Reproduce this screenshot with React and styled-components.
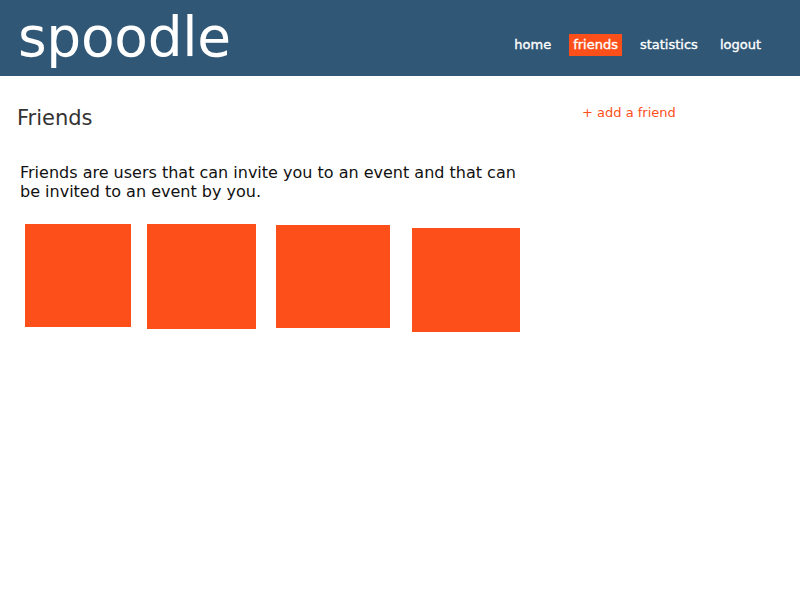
import React from "react";
import styled, { createGlobalStyle } from "styled-components";

const GlobalStyle = createGlobalStyle`
  body {
    margin: 0;
    background: #ffffff;
    font-family: "DejaVu Sans", Verdana, sans-serif;
  }
`;

const Header = styled.header`
  height: 76px;
  background: #305776;
  display: flex;
  align-items: center;
  justify-content: space-between;
  padding: 0 35px 0 18px;
  box-sizing: border-box;
`;

const Logo = styled.div`
  color: #ffffff;
  font-size: 55px;
  line-height: 1;
  letter-spacing: -0.3px;
  margin-top: -2px;
`;

const Nav = styled.nav`
  display: flex;
  align-items: center;
  gap: 14px;
  margin-top: 13px;
`;

const NavLink = styled.a`
  color: #ffffff;
  font-size: 13px;
  -webkit-text-stroke: 0.35px #ffffff;
  padding: 3px 4px 4px;
  background: ${(p) => (p.$active ? "#fd4f1a" : "transparent")};
  text-decoration: none;
`;

const Body = styled.div`
  display: flex;
  padding: 26px 0 0 17px;
`;

const Main = styled.main`
  width: 510px;
  padding-top: 4px;
`;

const Title = styled.h1`
  margin: 0;
  font-size: 21px;
  font-weight: normal;
  color: #333333;
  line-height: 24px;
`;

const Intro = styled.p`
  margin: 33px 0 0 3px;
  font-size: 16px;
  line-height: 19px;
  color: #111111;
`;

const Pics = styled.div`
  display: flex;
  align-items: flex-start;
  margin-top: 23px;
  padding-left: 8px;
`;

const Pic = styled.div`
  background: #fd4f1a;
  width: ${(p) => p.$w}px;
  height: ${(p) => p.$h}px;
  margin-left: ${(p) => p.$ml}px;
  margin-top: ${(p) => p.$mt}px;
`;

const Aside = styled.aside`
  padding: 0 0 0 55px;
`;

const AddLink = styled.a`
  color: #fd4f1a;
  font-size: 13px;
  line-height: 15px;
  text-decoration: none;
`;

const pics = [
  { w: 106, h: 103, ml: 0, mt: 0 },
  { w: 109, h: 105, ml: 16, mt: 0 },
  { w: 114, h: 103, ml: 20, mt: 1 },
  { w: 108, h: 104, ml: 22, mt: 4 },
];

export default function App() {
  return (
    <>
      <GlobalStyle />
      <Header>
        <Logo>spoodle</Logo>
        <Nav>
          <NavLink>home</NavLink>
          <NavLink $active>friends</NavLink>
          <NavLink>statistics</NavLink>
          <NavLink>logout</NavLink>
        </Nav>
      </Header>
      <Body>
        <Main>
          <Title>Friends</Title>
          <Intro>
            Friends are users that can invite you to an event and that can be
            invited to an event by you.
          </Intro>
          <Pics>
            {pics.map((p, i) => (
              <Pic key={i} $w={p.w} $h={p.h} $ml={p.ml} $mt={p.mt} />
            ))}
          </Pics>
        </Main>
        <Aside>
          <AddLink>+ add a friend</AddLink>
        </Aside>
      </Body>
    </>
  );
}
